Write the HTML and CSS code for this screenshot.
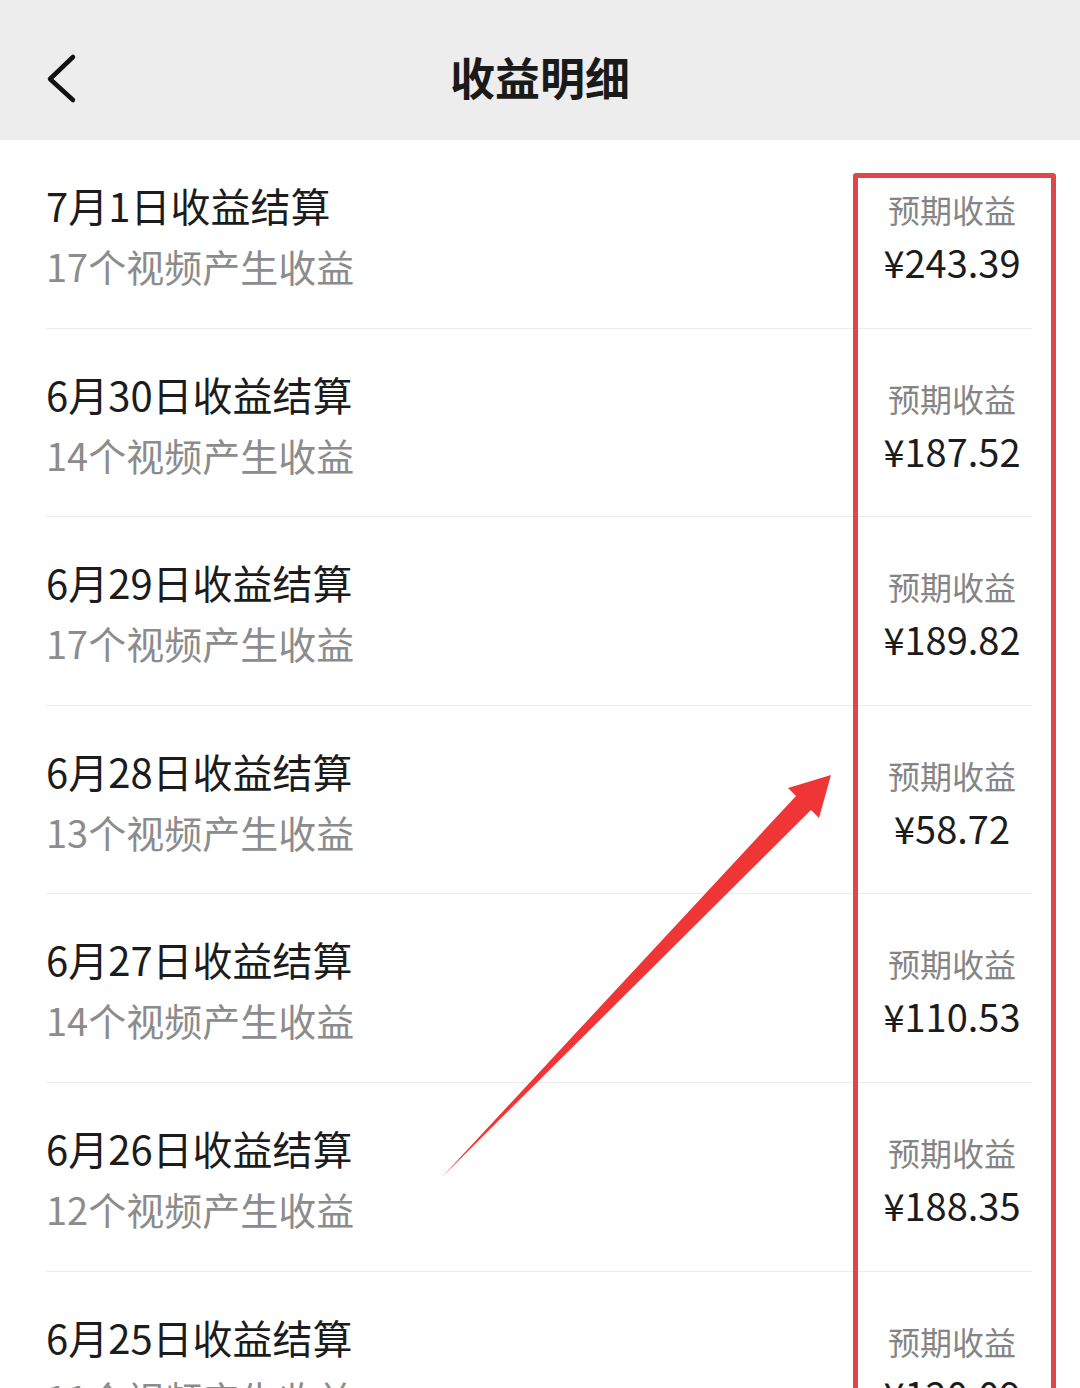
FILE: index.html
```html
<!DOCTYPE html>
<html lang="zh-CN">
<head>
    <meta charset="UTF-8">
    <meta name="viewport" content="width=device-width, initial-scale=1.0">
    <title>收益明细</title>
    <link rel="stylesheet" href="styles.css">
</head>
<body>
    <div class="page">
        <div class="header">
            <svg class="back" width="44" height="60" viewBox="0 0 44 60">
                <path d="M33 9 L10 31 L33 52" fill="none" stroke="#111" stroke-width="4.5" stroke-linecap="round" stroke-linejoin="round"/>
            </svg>
            <h1>收益明细</h1>
        </div>

        <div class="list">
            <div class="row">
                <div class="info">
                    <p class="day">7月1日收益结算</p>
                    <p class="count">17个视频产生收益</p>
                </div>
                <div class="money">
                    <p class="label">预期收益</p>
                    <p class="amount">¥243.39</p>
                </div>
            </div>
            <div class="row">
                <div class="info">
                    <p class="day">6月30日收益结算</p>
                    <p class="count">14个视频产生收益</p>
                </div>
                <div class="money">
                    <p class="label">预期收益</p>
                    <p class="amount">¥187.52</p>
                </div>
            </div>
            <div class="row">
                <div class="info">
                    <p class="day">6月29日收益结算</p>
                    <p class="count">17个视频产生收益</p>
                </div>
                <div class="money">
                    <p class="label">预期收益</p>
                    <p class="amount">¥189.82</p>
                </div>
            </div>
            <div class="row">
                <div class="info">
                    <p class="day">6月28日收益结算</p>
                    <p class="count">13个视频产生收益</p>
                </div>
                <div class="money">
                    <p class="label">预期收益</p>
                    <p class="amount">¥58.72</p>
                </div>
            </div>
            <div class="row">
                <div class="info">
                    <p class="day">6月27日收益结算</p>
                    <p class="count">14个视频产生收益</p>
                </div>
                <div class="money">
                    <p class="label">预期收益</p>
                    <p class="amount">¥110.53</p>
                </div>
            </div>
            <div class="row">
                <div class="info">
                    <p class="day">6月26日收益结算</p>
                    <p class="count">12个视频产生收益</p>
                </div>
                <div class="money">
                    <p class="label">预期收益</p>
                    <p class="amount">¥188.35</p>
                </div>
            </div>
            <div class="row">
                <div class="info">
                    <p class="day">6月25日收益结算</p>
                    <p class="count">11个视频产生收益</p>
                </div>
                <div class="money">
                    <p class="label">预期收益</p>
                    <p class="amount">¥120.09</p>
                </div>
            </div>
        </div>

        <!-- annotations drawn over the screenshot -->
        <div class="highlight"></div>
        <svg class="arrow" width="1080" height="1388" viewBox="0 0 1080 1388">
            <polygon points="442,1177 796,796 788,788 831,775 819,818 811,810" fill="#ef3535"/>
        </svg>
    </div>
</body>
</html>
```

FILE: styles.css
```css
body {
    margin: 0;
    padding: 0;
    background-color: #fff;
    font-family: "Noto Sans CJK SC", "Noto Sans", sans-serif;
    color: #1c1c1c;
}
p {
    margin: 0;
}
.page {
    position: relative;
    height: 1388px;
    overflow: hidden;
}
.header {
    position: relative;
    height: 140px;
    background-color: #ededed;
    display: flex;
    align-items: center;
    justify-content: center;
}
.header h1 {
    margin: 0;
    font-size: 45px;
    font-weight: 700;
    line-height: 60px;
    margin-top: 14px;
    color: #1a1a1a;
}
.back {
    position: absolute;
    left: 40px;
    top: 48px;
}
.row {
    box-sizing: border-box;
    height: 188.6px;
    margin: 0 48px 0 46px;
    border-bottom: 1px solid #ececec;
    display: flex;
    justify-content: space-between;
}
.info {
    padding-top: 37px;
}
.day {
    font-size: 40px;
    line-height: 56px;
    color: #1c1c1c;
}
.count {
    margin-top: 5px;
    font-size: 38px;
    line-height: 56px;
    color: #8c8c8c;
}
.money {
    width: 160px;
    padding-top: 45px;
    text-align: center;
}
.label {
    font-size: 32px;
    line-height: 48px;
    color: #858585;
}
.amount {
    margin-top: 5px;
    font-size: 38px;
    line-height: 48px;
    color: #1c1c1c;
}
.highlight {
    position: absolute;
    left: 853px;
    top: 173px;
    width: 193px;
    height: 1300px;
    border: 5px solid #e0474a;
    border-radius: 3px;
}
.arrow {
    position: absolute;
    left: 0;
    top: 0;
}
```
